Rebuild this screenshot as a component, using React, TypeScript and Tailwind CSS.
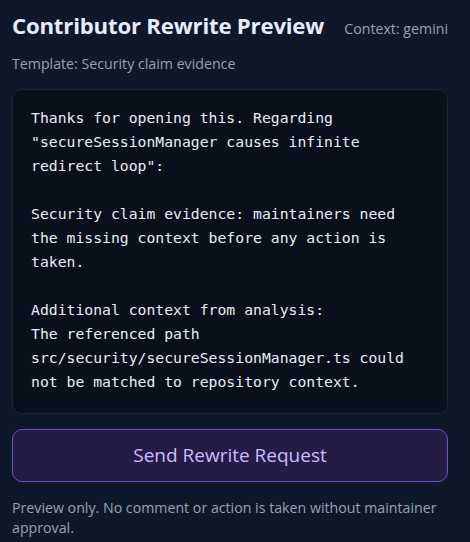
import React from 'react';

const lines = [
  'Thanks for opening this. Regarding',
  '"secureSessionManager causes infinite',
  'redirect loop":',
  '',
  'Security claim evidence: maintainers need',
  'the missing context before any action is',
  'taken.',
  '',
  'Additional context from analysis:',
  'The referenced path',
  'src/security/secureSessionManager.ts could',
  'not be matched to repository context.',
];

const App: React.FC = () => {
  return (
    <div
      className="min-h-[542px] w-full bg-[#0f172a] pl-3 pr-[22px] pt-[12px] pb-3"
      style={{ fontFamily: '"Open Sans", "Noto Sans", sans-serif' }}
    >
      <div className="flex items-baseline justify-between">
        <h1 className="text-[22.2px] font-bold leading-[28px] text-[#e6ecf8] tracking-[-0.2px]">
          Contributor Rewrite Preview
        </h1>
        <span className="text-[14.2px] text-[#94a3b8]">Context: gemini</span>
      </div>
      <p className="mt-[14px] text-[14.2px] leading-[20px] text-[#94a3b8]">
        Template: Security claim evidence
      </p>

      <div className="mt-[15px] rounded-[10px] border border-[#1c2536] bg-[#0a0f1c] px-[18px] pt-[16px] pb-[19px]">
        <pre
          className="whitespace-pre text-[14.75px] leading-[24px] text-[#e8edf5]"
          style={{ fontFamily: '"DejaVu Sans Mono", "Liberation Mono", monospace' }}
        >
          {lines.join('\n')}
        </pre>
      </div>

      <button className="mt-[15px] flex h-[53px] w-full items-center justify-center rounded-[10px] border border-[#6e51c4] bg-[#241b47] text-[19px] text-[#cbbdfd]">
        Send Rewrite Request
      </button>

      <p className="mt-[16px] text-[14.2px] leading-[20px] text-[#94a3b8]">
        Preview only. No comment or action is taken without maintainer approval.
      </p>
    </div>
  );
};

export default App;
